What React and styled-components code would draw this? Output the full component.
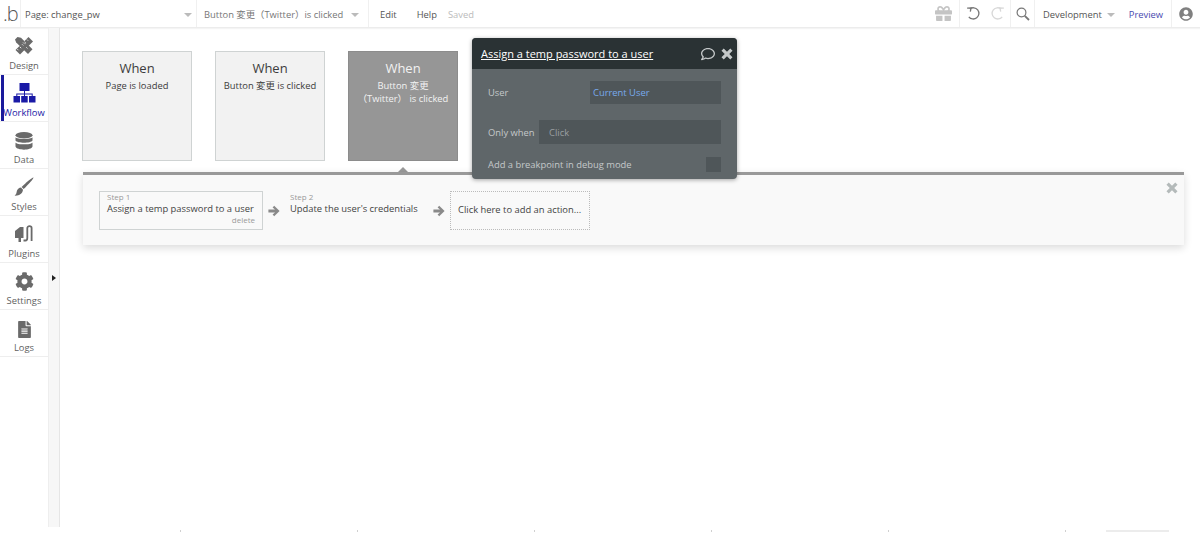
import React from 'react';
import styled, { createGlobalStyle } from 'styled-components';
import { FaCog, FaFileAlt, FaGift, FaUserCircle, FaRegComment } from 'react-icons/fa';

const Global = createGlobalStyle`
  html, body { margin: 0; padding: 0; background: #fff; }
  body { font-family: "Open Sans", "Noto Sans CJK JP", sans-serif; color: #444; }
  * { box-sizing: border-box; }
`;
const Page = styled.div`
  width: 1200px; height: 533px; overflow: hidden; display: flex; flex-direction: column; background: #fff;
`;
const TopBar = styled.header`
  height: 28px; flex: none; display: flex; align-items: stretch; border-bottom: 1px solid #ececec; box-shadow: 0 1px 1px #f4f4f4;
  font-size: 9.4px; color: #555;
`;
const Cell = styled.div`
  display: flex; align-items: center; flex: none;
  width: ${p => p.$w}px;
  padding-left: ${p => p.$pl || 0}px;
  padding-right: ${p => p.$pr || 0}px;
  justify-content: ${p => p.$justify || 'flex-start'};
  gap: ${p => p.$gap || 0}px;
  border-right: ${p => (p.$line ? '1px solid #f0f0f0' : 'none')};
`;
const Spacer = styled.div`flex: 1;`;
const Logo = styled.span`
  font-size: 20px; line-height: 27px; height: 27px; color: #555; font-weight: 300; letter-spacing: -1px; margin-left: 3px; padding-bottom: 2px;
`;
const Caret = styled.span`
  width: 0; height: 0; border-left: 4px solid transparent; border-right: 4px solid transparent; border-top: 4px solid #bbb; flex: none;
  margin-left: ${p => p.$ml || 0}px; margin-top: 2px;
`;
const BarText = styled.span`
  color: ${p => p.$color || '#555'}; margin-left: ${p => p.$ml || 0}px; white-space: nowrap; line-height: 1.3; margin-top: 3px;
`;
const Body = styled.div`
  height: 499px; flex: none; display: flex;
`;
const Sidebar = styled.nav`
  width: 48px; flex: none; padding-top: 0;
`;
const NavItem = styled.div`
  height: 47px; display: flex; flex-direction: column; align-items: center; justify-content: flex-end; padding-bottom: 1px;
  border-bottom: 1px solid #eee; position: relative; color: ${p => (p.$active ? '#1a1aa6' : '#5f5f5f')}; font-size: 9.4px; line-height: 14px;
  &::before { content: ''; display: ${p => (p.$active ? 'block' : 'none')}; position: absolute; left: 1px; top: 0; bottom: 0; width: 3px; background: #1a1a9c; }
  svg { display: block; margin-bottom: 3px; }
`;
const Strip = styled.div`
  width: 12px; flex: none; background: #f7f7f7; border-left: 1px solid #eee; border-right: 1px solid #e6e6e6; position: relative;
`;
const StripArrow = styled.span`
  position: absolute; left: 3px; top: 247px; width: 0; height: 0; border-top: 3px solid transparent; border-bottom: 3px solid transparent; border-left: 4px solid #222;
`;
const Canvas = styled.main`
  flex: 1; position: relative; padding: 23px 16px 0 22px;
`;
const Cards = styled.div`
  display: flex; gap: 23px;
`;
const Card = styled.div`
  width: 110px; height: 110px; flex: none; text-align: center; padding-top: 7px;
  background: ${p => (p.$selected ? '#969696' : '#f2f2f2')};
  border: 1px solid ${p => (p.$selected ? '#8c8c8c' : '#cfd3d3')};
  color: ${p => (p.$selected ? '#f2f2f2' : '#3c3c3c')};
  position: relative;
  ${p => p.$selected && `&::after { content: ''; position: absolute; left: 50%; margin-left: -5px; bottom: -12px; width: 0; height: 0; border-left: 5px solid transparent; border-right: 5px solid transparent; border-bottom: 5px solid #999; }`}
`;
const When = styled.div`
  font-size: 13px; line-height: 18px;
`;
const Cond = styled.div`
  font-size: 9.4px; line-height: 12.5px; margin-top: 3px; white-space: pre-line;
`;
const Panel = styled.section`
  margin-top: 11px; height: 73px; background: #f9f9f9; border-top: 3px solid #999; box-shadow: 0 3px 8px rgba(0,0,0,.14);
  display: flex; align-items: flex-start; padding: 16px 0 0 16px; position: relative; margin-left: 1px;
`;
const Step = styled.div`
  height: 39px; flex: none; padding: 0 7px; width: ${p => p.$w}px; position: relative;
  border: 1px solid ${p => (p.$boxed ? '#cfd3d3' : 'transparent')}; color: #444;
`;
const StepNo = styled.div`
  font-size: 8px; line-height: 10px; color: #999;
`;
const StepName = styled.div`
  font-size: 9.4px; line-height: 13px; white-space: nowrap;
`;
const Del = styled.div`
  font-size: 8px; line-height: 10px; color: #999; text-align: right;
`;
const ArrowBox = styled.div`
  width: ${p => p.$w}px; height: 39px; display: flex; align-items: center; padding-left: ${p => p.$pl}px; flex: none;
`;
const AddAction = styled.div`
  width: 140px; height: 39px; flex: none; border: 1px dotted #bbb; font-size: 9.4px; display: flex; align-items: center; padding: 0 0 2px 7px; color: #444; white-space: nowrap;
`;
const PanelClose = styled.span`
  position: absolute; right: 6px; top: 7px; display: flex;
`;
const Popup = styled.aside`
  position: absolute; left: 412px; top: 10px; width: 265px; height: 141px; background: #5f6669; border-radius: 4px; overflow: hidden; box-shadow: 0 1px 4px rgba(0,0,0,.35); color: #c4c8c9; font-size: 9.4px; z-index: 2;
`;
const PopHead = styled.div`
  height: 31px; background: #2a3234; display: flex; align-items: center; padding: 0 4px 0 9px; color: #fff; gap: 6px;
`;
const PopTitle = styled.span`
  font-size: 11px; text-decoration: underline; flex: 1; white-space: nowrap;
`;
const PopBody = styled.div`
  padding: 12px 16px 0 16px;
`;
const Row = styled.div`
  display: flex; align-items: center; justify-content: space-between; height: ${p => p.$h}px; margin-bottom: ${p => p.$mb || 0}px;
`;
const Field = styled.div`
  width: ${p => p.$w}px; height: 100%; background: #4f5659; display: flex; align-items: center; padding-left: ${p => p.$pl}px; color: ${p => p.$color};
`;
const Check = styled.span`
  width: 15px; height: 15px; background: #4f5659; display: block;
`;
const Bottom = styled.footer`
  height: 6px; flex: none; display: flex; align-items: flex-end; padding: 0 30px 1px 180px; gap: 176px;
`;
const Tick = styled.i`
  width: 1px; height: 2px; background: #d0d0d0; display: block; flex: none;
`;
const ScrollBar = styled.i`
  width: 63px; height: 2px; background: #ececec; display: block; margin-left: -136px; flex: none;
`;

const DesignIcon = () => (
  <svg width="20" height="20" viewBox="0 0 20 20" fill="#6a6a6a">
    <path d="M1 3.5 L3.5 1 L7 1.8 L18.5 13.3 L14 18 L2.2 6.5 Z" />
    <path d="M14.5 1 L19 5.5 L6 18.5 L1.5 14 Z" />
    <path d="M13 3.6 l1 1 M10.6 6 l1.4 1.4 M8.2 8.4 l1 1 M5.8 10.8 l1.4 1.4 M3.4 13.2 l1 1" stroke="#fff" strokeWidth=".9" />
    <path d="M9 6.4 L10.8 8.2 M12 11 L13.6 12.6" stroke="#fff" strokeWidth=".6" />
  </svg>
);
const WorkflowIcon = () => (
  <svg width="23" height="20" viewBox="0 0 23 20" fill="#1a1aa6">
    <rect x="6.5" y="0" width="10" height="8" />
    <rect x="0.5" y="13" width="6.5" height="6.5" />
    <rect x="8.2" y="13" width="6.5" height="6.5" />
    <rect x="16" y="13" width="6.5" height="6.5" />
    <path d="M11 8 h1 v2.5 h7.7 v2.5 h-1 v-1.5 h-6.7 v1.5 h-1 v-1.5 h-6.7 v1.5 h-1 v-2.5 h7.7 z" />
  </svg>
);
const DataIcon = () => (
  <svg width="18" height="18" viewBox="0 0 18 18" fill="#6a6a6a">
    <ellipse cx="9" cy="3.2" rx="8.5" ry="3.2" />
    <path d="M.5 5.2 C2 7.6 16 7.6 17.5 5.2 V8.4 C16 11.4 2 11.4 .5 8.4 Z" />
    <path d="M.5 10.4 C2 13 16 13 17.5 10.4 V14.6 C16 18.8 2 18.8 .5 14.6 Z" />
  </svg>
);
const BrushIcon = () => (
  <svg width="20" height="20" viewBox="0 0 20 20" fill="#6a6a6a">
    <path d="M19.5 .5 C20 1.2 14 8 9.6 12 L7.6 10 C11.5 6 18.6 0 19.5 .5 Z" />
    <path d="M7 10.6 L9 12.8 C8.6 16.8 5 19 .6 18.6 C2.6 17.6 2.4 15.6 3 13.6 C3.6 12 5.2 10.8 7 10.6 Z" />
  </svg>
);
const PlugIcon = () => (
  <svg width="20" height="20" viewBox="0 0 20 20">
    <path d="M1 7 L6 3 H9.5 V14 H7 V18 H4.5 V14 H1 Z" fill="#6a6a6a" />
    <path d="M9.5 16.5 H11.5 C13 16.5 13.3 15.5 13.3 14 V4 C13.3 1.6 17.6 1.6 17.6 4 V17" fill="none" stroke="#6a6a6a" strokeWidth="1.8" />
  </svg>
);
const UndoIcon = ({ flip, color }) => (
  <svg width="15" height="15" viewBox="0 0 16 16" fill="none" stroke={color} strokeWidth="1.4" transform={flip ? 'scale(-1 1)' : undefined}>
    <path d="M4 3.2 A6 6 0 1 1 3 11.5" />
    <path d="M1.2 2.2 L5.4 2 L4.6 6" />
  </svg>
);
const SearchIcon = () => (
  <svg width="14" height="14" viewBox="0 0 14 14" fill="none" stroke="#777">
    <circle cx="5.5" cy="5.5" r="4.4" strokeWidth="1.2" />
    <path d="M8.8 8.8 L13 13" strokeWidth="1.8" />
  </svg>
);
const ThickArrow = () => (
  <svg width="12" height="12" viewBox="0 0 12 12" fill="#8a8a8a">
    <path d="M6.2 .8 L11.6 6 L6.2 11.2 L4.6 9.6 L7 7.4 H.4 V4.6 H7 L4.6 2.4 Z" />
  </svg>
);
const ThickX = ({ color, size }) => (
  <svg width={size} height={size} viewBox="0 0 12 12" stroke={color} strokeWidth="3.2">
    <path d="M1.6 1.6 L10.4 10.4 M10.4 1.6 L1.6 10.4" />
  </svg>
);

export default function App() {
  return (
    <Page>
      <Global />
      <TopBar>
        <Cell $w={21} $line><Logo>.b</Logo></Cell>
        <Cell $w={176} $pl={4} $pr={4} $line $justify="space-between">
          <BarText>Page: change_pw</BarText><Caret />
        </Cell>
        <Cell $w={172} $pl={7} $line>
          <BarText $color="#777">Button 変更（Twitter）is clicked</BarText><Caret $ml={8} />
        </Cell>
        <Cell $w={80} $pl={11}>
          <BarText>Edit</BarText><BarText $ml={20}>Help</BarText><BarText $color="#bbb" $ml={11}>Saved</BarText>
        </Cell>
        <Spacer />
        <Cell $w={32} $justify="center" $line><FaGift size={17} color="#c4c4c4" /></Cell>
        <Cell $w={51} $justify="center" $gap={9} $line>
          <UndoIcon color="#777" /><UndoIcon flip color="#d8d8d8" />
        </Cell>
        <Cell $w={24} $justify="center" $line><SearchIcon /></Cell>
        <Cell $w={137} $pl={8} $line>
          <BarText>Development</BarText><Caret $ml={5} /><BarText $color="#4a4ab0" $ml={14}>Preview</BarText>
        </Cell>
        <Cell $w={28} $justify="center"><FaUserCircle size={14} color="#808080" /></Cell>
      </TopBar>
      <Body>
        <Sidebar>
          <NavItem><DesignIcon />Design</NavItem>
          <NavItem $active><WorkflowIcon />Workflow</NavItem>
          <NavItem><DataIcon />Data</NavItem>
          <NavItem><BrushIcon />Styles</NavItem>
          <NavItem><PlugIcon />Plugins</NavItem>
          <NavItem><FaCog size={19} color="#6a6a6a" />Settings</NavItem>
          <NavItem><FaFileAlt size={17} color="#6a6a6a" />Logs</NavItem>
        </Sidebar>
        <Strip><StripArrow /></Strip>
        <Canvas>
          <Cards>
            <Card><When>When</When><Cond>Page is loaded</Cond></Card>
            <Card><When>When</When><Cond>Button 変更 is clicked</Cond></Card>
            <Card $selected><When>When</When><Cond>{'Button 変更\n（Twitter） is clicked'}</Cond></Card>
          </Cards>
          <Panel>
            <Step $boxed $w={164}>
              <StepNo>Step 1</StepNo>
              <StepName>Assign a temp password to a user</StepName>
              <Del>delete</Del>
            </Step>
            <ArrowBox $w={19} $pl={5}><ThickArrow /></ArrowBox>
            <Step $w={147}>
              <StepNo>Step 2</StepNo>
              <StepName>Update the user's credentials</StepName>
            </Step>
            <ArrowBox $w={21} $pl={4}><ThickArrow /></ArrowBox>
            <AddAction>Click here to add an action...</AddAction>
            <PanelClose><ThickX size={12} color="#b4baba" /></PanelClose>
          </Panel>
          <Popup>
            <PopHead>
              <PopTitle>Assign a temp password to a user</PopTitle>
              <FaRegComment size={14} color="#c4c8c9" />
              <ThickX size={12} color="#c4c8c9" />
            </PopHead>
            <PopBody>
              <Row $h={23} $mb={16}>User<Field $w={131} $pl={3} $color="#78aaec">Current User</Field></Row>
              <Row $h={24} $mb={13}>Only when<Field $w={182} $pl={10} $color="#9a9fa1">Click</Field></Row>
              <Row $h={15}>Add a breakpoint in debug mode<Check /></Row>
            </PopBody>
          </Popup>
        </Canvas>
      </Body>
      <Bottom>
        <Tick /><Tick /><Tick /><Tick /><Tick /><Tick /><ScrollBar />
      </Bottom>
    </Page>
  );
}
